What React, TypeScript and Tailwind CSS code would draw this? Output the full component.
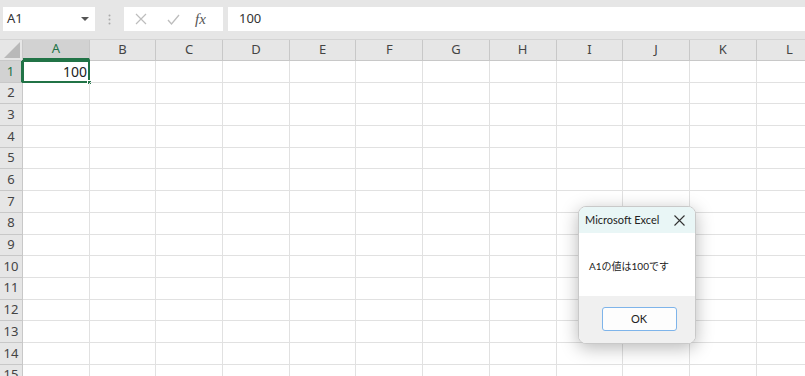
import React from 'react';

const cols = ['A', 'B', 'C', 'D', 'E', 'F', 'G', 'H', 'I', 'J', 'K', 'L'];
const rows = Array.from({ length: 15 }, (_, i) => i + 1);
const font = { fontFamily: '"Noto Sans", "Noto Sans CJK JP", sans-serif' };
const dialogFont = { fontFamily: 'Lato, "Noto Sans CJK JP", sans-serif' };

function Toolbar() {
  return (
    <div className="h-[40px] bg-[#e6e6e6] flex items-start pt-[7px] pl-[3px] border-b border-[#d4d4d4]">
      <div className="w-[92px] h-[24px] bg-white flex items-center justify-between px-[4px] text-[13px] text-[#333]">
        <span>A1</span>
        <svg width="8" height="5" viewBox="0 0 8 5" className="mr-[2px]">
          <path d="M0 0h8L4 4z" fill="#555" />
        </svg>
      </div>
      <div className="w-[29px] h-[24px] flex items-center justify-center">
        <svg width="3" height="11" viewBox="0 0 3 11">
          <circle cx="1.5" cy="1.5" r="1" fill="#aaa" />
          <circle cx="1.5" cy="5.5" r="1" fill="#aaa" />
          <circle cx="1.5" cy="9.5" r="1" fill="#aaa" />
        </svg>
      </div>
      <div className="w-[99px] h-[24px] bg-white flex items-center">
        <svg width="12" height="12" viewBox="0 0 12 12" className="ml-[11px]">
          <path d="M1 1l10 10M11 1L1 11" stroke="#bdbdbd" strokeWidth="1.2" />
        </svg>
        <svg width="13" height="11" viewBox="0 0 13 11" className="ml-[20px]">
          <path d="M1 6l3.5 4L12 1" stroke="#bdbdbd" strokeWidth="1.3" fill="none" />
        </svg>
        <span className="ml-[15px] text-[15px] italic text-[#555]" style={{ fontFamily: '"Liberation Serif", serif' }}>
          fx
        </span>
      </div>
      <div className="ml-[5px] flex-1 h-[24px] bg-white flex items-center pl-[11px] text-[13px] text-[#333]">
        100
      </div>
    </div>
  );
}

function HeaderRow() {
  return (
    <div className="flex h-[21px] bg-[#e6e6e6] border-b border-[#c8c8c8]">
      <div className="w-[23px] shrink-0 relative border-r border-[#c8c8c8]">
        <svg width="16" height="16" viewBox="0 0 16 16" className="absolute right-[2px] bottom-[2px]">
          <path d="M16 0V16H0z" fill="#b9b9b9" />
        </svg>
      </div>
      {cols.map((c, i) => (
        <div
          key={c}
          className={
            i === 0
              ? 'w-[66.7px] shrink-0 flex items-center justify-center text-[13px] bg-[#d2d2d2] text-[#217346] border-r border-[#c8c8c8] border-b-2 border-b-[#217346]'
              : 'w-[66.7px] shrink-0 flex items-center justify-center text-[13px] text-[#444] border-r border-[#c8c8c8]'
          }
        >
          {c}
        </div>
      ))}
    </div>
  );
}

function GridRow({ n }: { n: number }) {
  return (
    <div className="flex h-[21.7px]">
      <div
        className={
          n === 1
            ? 'w-[23px] shrink-0 flex items-center justify-center text-[13px] bg-[#d2d2d2] text-[#217346] border-b border-[#c8c8c8] border-r-2 border-r-[#217346]'
            : 'w-[23px] shrink-0 flex items-center justify-center text-[13px] bg-[#e6e6e6] text-[#444] border-b border-r border-[#c8c8c8]'
        }
      >
        {n}
      </div>
      {cols.map((c, i) => (
        <div key={c} className="w-[66.7px] shrink-0 border-r border-b border-[#e1e1e1] relative">
          {n === 1 && i === 0 && (
            <div className="absolute -left-[1px] -top-[1px] w-[68px] h-[23px] border-2 border-[#217346] flex items-center justify-end pr-[1px] text-[14px] text-[#222]">
              100
              <div className="absolute -right-[4px] -bottom-[4px] w-[5px] h-[5px] bg-[#217346] border border-white" />
            </div>
          )}
        </div>
      ))}
    </div>
  );
}

function MessageBox() {
  return (
    <div
      className="absolute left-[578px] top-[206px] w-[118px] h-[138px] rounded-[8px] overflow-hidden border border-[#c9c9c9] shadow-[0_4px_18px_rgba(0,0,0,0.28)] flex flex-col bg-white"
      style={dialogFont}
    >
      <div className="h-[26px] bg-[#e9f6f6] flex items-center justify-between pl-[6px] pr-[10px] text-[11px] text-[#222]">
        <span>Microsoft Excel</span>
        <svg width="11" height="11" viewBox="0 0 11 11">
          <path d="M0.5 0.5l10 10M10.5 0.5l-10 10" stroke="#333" strokeWidth="1.1" />
        </svg>
      </div>
      <div className="h-[63px] flex items-center pl-[10px] pt-[3px] text-[10px] text-[#222]">A1の値は100です</div>
      <div className="flex-1 bg-[#f0f0f0] flex justify-center pt-[11px]">
        <div className="w-[75px] h-[24px] ml-[4px] bg-[#fdfdfd] border border-[#7eb4ea] rounded-[3px] flex items-center justify-center text-[11px] text-[#222]">
          OK
        </div>
      </div>
    </div>
  );
}

export default function App() {
  return (
    <div className="w-[805px] h-[376px] overflow-hidden relative bg-white" style={font}>
      <Toolbar />
      <HeaderRow />
      {rows.map((n) => (
        <GridRow key={n} n={n} />
      ))}
      <MessageBox />
    </div>
  );
}
